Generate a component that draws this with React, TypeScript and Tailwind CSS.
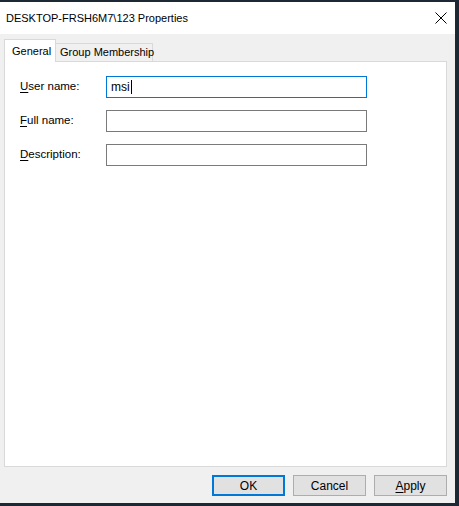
import React from "react";

const font = { fontFamily: '"Liberation Sans", Arial, sans-serif' };

function Field({ label, hotkey, value, focused }: { label: string; hotkey: string; value?: string; focused?: boolean }) {
  const rest = label.slice(1);
  return (
    <div className="flex items-center h-[22px]">
      <span className="w-[86px] text-[11.5px] text-black">
        <span className="underline underline-offset-[1.5px]">{hotkey}</span>
        {rest}
      </span>
      <div
        className={
          "w-[261px] h-[22px] flex items-center px-[4px] bg-white border " +
          (focused ? "border-[#0078d7]" : "border-[#7a7a7a]")
        }
      >
        {value !== undefined && (
          <span className="text-[12px] text-black flex items-center">
            {value}
            <span className="inline-block w-[1px] h-[14px] bg-black ml-[1px]" />
          </span>
        )}
      </div>
    </div>
  );
}

function Button({ children, primary }: { children: React.ReactNode; primary?: boolean }) {
  return (
    <div
      className={
        "w-[73px] h-[21px] flex items-center justify-center bg-[#e1e1e1] text-[12px] text-black " +
        (primary ? "border-2 border-[#0078d7]" : "border border-[#adadad]")
      }
    >
      {children}
    </div>
  );
}

export default function App() {
  return (
    <div className="w-[459px] h-[506px] flex bg-[#1c2833]" style={font}>
      <div className="w-[455px] flex flex-col mt-[2px] mb-[3px]">
        <div className="h-[32px] bg-white flex items-center justify-between pl-[6px] pr-[8px]">
          <span className="text-[11px] text-black">DESKTOP-FRSH6M7\123 Properties</span>
          <svg width="12" height="12" viewBox="0 0 12 12">
            <path d="M0.5 0.5 L11.5 11.5 M11.5 0.5 L0.5 11.5" stroke="#000" strokeWidth="1" />
          </svg>
        </div>
        <div className="flex-1 bg-[#f0f0f0] flex flex-col pl-[4px] pr-[8px]">
          <div className="h-[27px] flex items-end">
            <div className="h-[23px] w-[52px] shrink-0 bg-white border border-b-0 border-[#d9d9d9] relative top-[1px] z-10 flex items-start pt-[3px] pl-[7px] text-[11px] text-black whitespace-nowrap">
              General
            </div>
            <div className="h-[18px] w-[97px] shrink-0 bg-[#f0f0f0] border border-b-0 border-l-0 border-[#d9d9d9] flex items-center pl-[4px] text-[11px] text-black whitespace-nowrap">
              Group Membership
            </div>
          </div>
          <div className="flex-1 bg-white border border-[#d9d9d9] flex flex-col gap-[12px] pt-[14px] pl-[15px]">
            <Field label="User name:" hotkey="U" value="msi" focused />
            <Field label="Full name:" hotkey="F" />
            <Field label="Description:" hotkey="D" />
          </div>
          <div className="h-[36px] flex justify-end items-start pt-[8px] gap-[8px]">
            <Button primary>OK</Button>
            <Button>Cancel</Button>
            <Button>
              <span className="underline underline-offset-[1.5px]">A</span>pply
            </Button>
          </div>
        </div>
      </div>
    </div>
  );
}
